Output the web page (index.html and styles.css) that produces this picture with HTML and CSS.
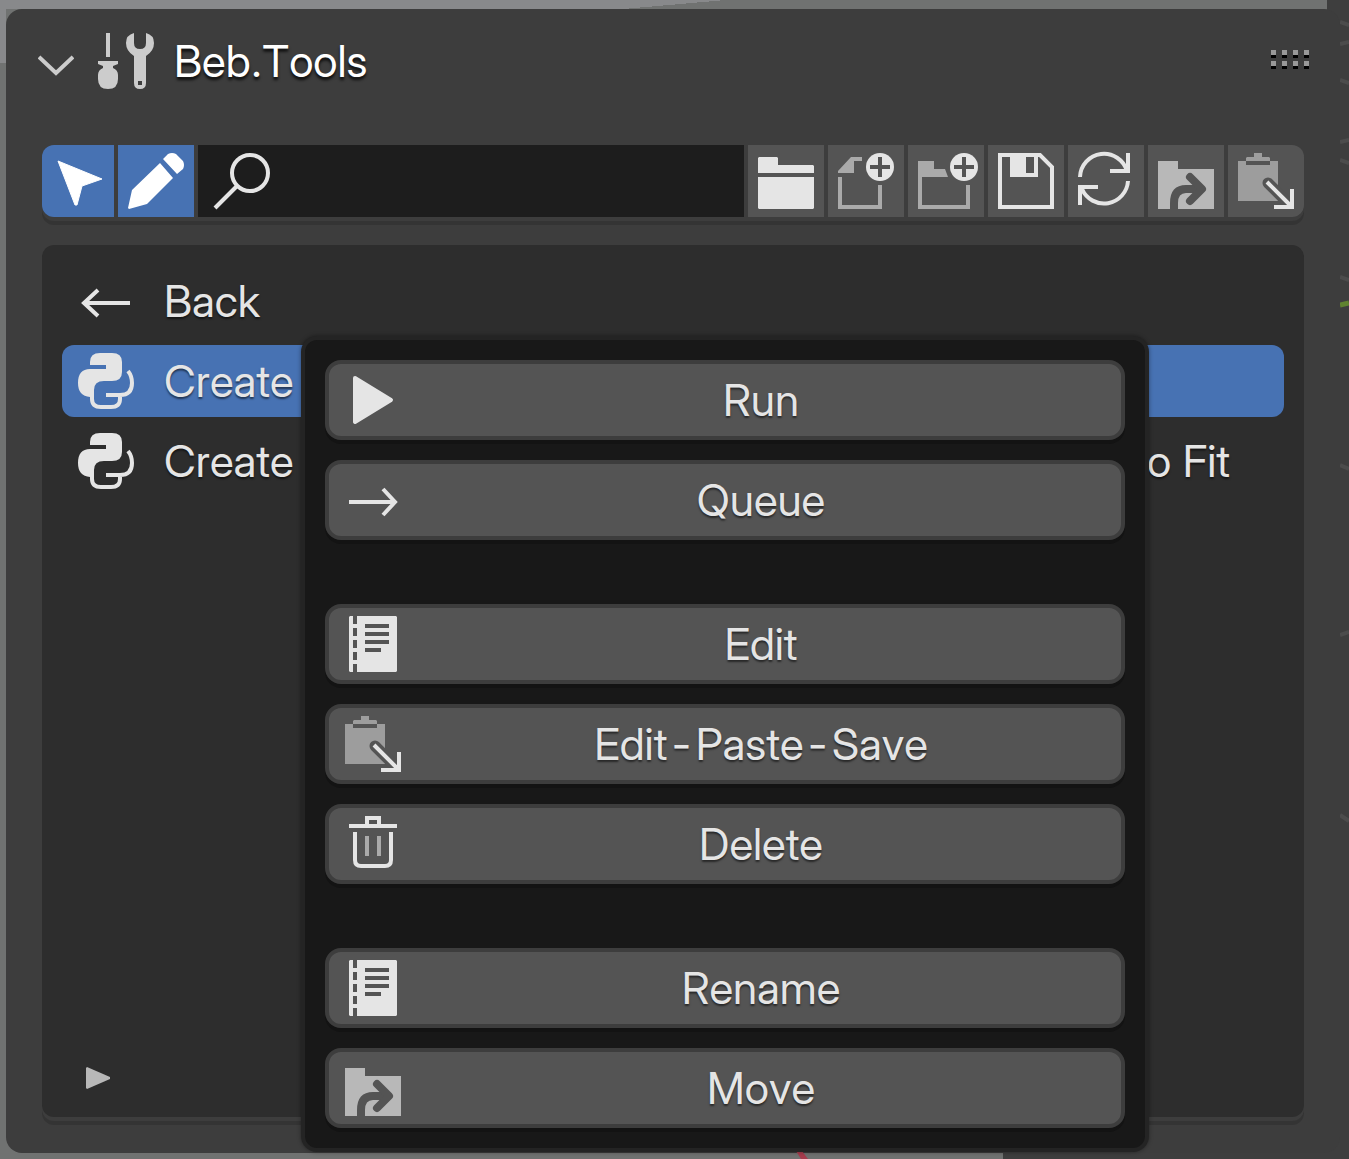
FILE: index.html
```html
<!DOCTYPE html>
<html lang="en">
<head>
<meta charset="utf-8">
<title>Beb.Tools</title>
<link rel="stylesheet" href="styles.css">
</head>
<body>
<svg class="sprite" aria-hidden="true">
  <symbol id="python" viewBox="0 0 56 56">
    <path fill="currentColor" d="M12 12V9Q12 0 22 0H34Q44 0 44 9V19Q44 28 34 28H26Q16 28 16 37V44H12Q0 43 0 30Q0 16 12 16H28V12Z"/>
    <path class="line" d="M14 42V46Q14 54 23 54H33Q42 54 42 46V42M28 42H42Q54 42 54 30Q54 23 50 18"/>
  </symbol>
  <symbol id="notebook" viewBox="0 0 56 56">
    <path fill="currentColor" fill-rule="evenodd" d="M5 0H8V8H12V0H51L52 1V55L51 56H12V48H8V56H5L4 55V1ZM8 12V20H12V12ZM8 24V32H12V24ZM8 36V44H12V36ZM20 8V12H44V8ZM20 16V20H44V16ZM20 24V28H44V24ZM20 32V36H36V32Z"/>
  </symbol>
  <symbol id="paste" viewBox="0 0 56 56">
    <path fill="#9d9d9d" d="M0 8H8V12H32V8H40V48H0ZM8 8V5L9 4H16V0H24V4H31L32 5V8Z"/>
    <path stroke="#545454" stroke-width="11" stroke-linecap="round" d="M30 30L52 52"/>
    <path class="line" d="M29 29L53 53M54 36V54H36"/>
  </symbol>
  <symbol id="move" viewBox="0 0 56 56">
    <path fill="#b8b8b8" d="M0 8H20V16H56V56H0Z"/>
    <path fill="none" stroke="#545454" stroke-width="8" d="M16 56V50Q16 36 28 36H42"/>
    <path fill="none" stroke="#545454" stroke-width="8" stroke-linecap="round" stroke-linejoin="round" d="M32 24L44 36L32 48"/>
  </symbol>
</svg>

<svg class="grid-lines" viewBox="0 0 9 840" aria-hidden="true">
  <path fill="none" stroke="#4c4c4c" stroke-width="4" d="M0 22L9 25M0 44L9 42M0 80L9 83M0 142L9 140M0 160L9 163M0 277L9 280M0 465L9 469M0 635L9 632M0 815L9 821"/>
  <path fill="none" stroke="#608330" stroke-width="5" d="M0 305L9 303"/>
</svg>
<svg class="axis-line" viewBox="0 0 12 8" aria-hidden="true"><path fill="#a63c4d" d="M0 0H6L12 8H5Z"/></svg>

<main class="panel">
  <header class="panel-header">
    <svg class="chevron" viewBox="0 0 36 56"><path class="line" d="M1 24L18 40L35 24"/></svg>
    <svg class="icon tools" viewBox="0 0 56 56">
      <path fill="currentColor" d="M8 0H12V24H8ZM0 28H20V31L15 33V35Q20 37 20 42V46Q20 56 10 56Q0 56 0 46V42Q0 37 5 35V33L0 31Z"/>
      <path fill="currentColor" fill-rule="evenodd" d="M36 0V10Q36 16 42 16Q48 16 48 10V0Q56 2 56 10Q56 18 48 23V50Q48 56 42 56Q36 56 36 50V23Q28 18 28 10Q28 2 36 0ZM40 48V52H44V48Z"/>
    </svg>
    <h1 class="title">Beb.Tools</h1>
    <svg class="grip" viewBox="0 0 38 22">
      <path fill="#999" d="M0 0h5v5h-5zM11 0h5v5h-5zM22 0h5v5h-5zM33 0h5v5h-5zM0 11h5v5h-5zM11 11h5v5h-5zM22 11h5v5h-5zM33 11h5v5h-5z"/>
      <path fill="#000" d="M0 5h5v3h-5zM11 5h5v3h-5zM22 5h5v3h-5zM33 5h5v3h-5zM0 16h5v3h-5zM11 16h5v3h-5zM22 16h5v3h-5zM33 16h5v3h-5z"/>
    </svg>
  </header>

  <div class="toolbar">
    <button class="tool tool-first tool-on" aria-label="Select"><svg class="icon" viewBox="0 0 56 56"><path fill="currentColor" stroke="currentColor" stroke-linejoin="round" d="M8 8L52 26L32 33L27 52H25Z"/></svg></button>
    <button class="tool tool-on" aria-label="Edit mode"><svg class="icon" viewBox="0 0 56 56"><path fill="currentColor" d="M32 10L45 25L19 51L1 56L0 55L4 37ZM35 6L40 1Q44 -1 48 1L55 8Q57 12 55 16L49 21Z"/></svg></button>
    <label class="search">
      <svg class="icon" viewBox="0 0 56 56"><circle class="line" cx="36" cy="20" r="18"/><path class="line" d="M23 33L1 55"/></svg>
      <input class="search-input" type="text" aria-label="Search">
    </label>
    <button class="tool" aria-label="Open folder"><svg class="icon" viewBox="0 0 56 56"><path fill="currentColor" d="M1 4H19L20 5V12H55L56 13V20H0V5ZM0 24H56V55L55 56H1L0 55Z"/></svg></button>
    <button class="tool" aria-label="New file"><svg class="icon" viewBox="0 0 56 56"><path fill="#aaa" d="M0 20V18L13 4H24V8H16V20Z"/><path class="line dim" d="M2 24V54H42V32"/><circle cx="42" cy="14" r="14" fill="currentColor"/><path stroke="#545454" stroke-width="4" d="M32 14H52M42 4V24"/></svg></button>
    <button class="tool" aria-label="New folder"><svg class="icon" viewBox="0 0 56 56"><path fill="#aaa" d="M0 8H16V16H27L30 24H0Z"/><path class="line dim" d="M2 23V54H50V32"/><circle cx="46" cy="14" r="14" fill="currentColor"/><path stroke="#545454" stroke-width="4" d="M36 14H56M46 4V24"/></svg></button>
    <button class="tool" aria-label="Save"><svg class="icon" viewBox="0 0 56 56"><path class="line" d="M2 2H42L54 14V54H2Z"/><path fill="currentColor" fill-rule="evenodd" d="M12 0H40V24H12ZM28 4V20H36V4Z"/></svg></button>
    <button class="tool" aria-label="Reload"><svg class="icon" viewBox="0 0 56 56"><path class="line" d="M2 24A24 24 0 0 1 49 18M50 0V18H32M50 28A24 24 0 0 1 4 36M2 52V34H20"/></svg></button>
    <button class="tool" aria-label="Move to folder"><svg class="icon"><use href="#move"/></svg></button>
    <button class="tool tool-last" aria-label="Paste"><svg class="icon"><use href="#paste"/></svg></button>
  </div>

  <section class="list">
    <button class="row"><svg class="icon" viewBox="0 0 56 56"><path class="line" d="M5 30H52M20 17L6 30L20 43"/></svg><span>Back</span></button>
    <button class="row row-selected"><svg class="icon"><use href="#python"/></svg><span>Create</span></button>
    <button class="row"><svg class="icon"><use href="#python"/></svg><span>Create</span><span class="row-end">o Fit</span></button>
    <button class="expand" aria-label="Expand"><svg class="expand-icon" viewBox="0 0 24 22"><path fill="currentColor" d="M0 1L1 0L24 10V12L1 22L0 21Z"/></svg></button>
  </section>
</main>

<nav class="menu">
  <div class="menu-group">
    <button class="item"><svg class="icon" viewBox="0 0 56 56"><path fill="currentColor" stroke="currentColor" stroke-width="4" stroke-linejoin="round" d="M10 6L46 28L10 50Z"/></svg><span class="item-label">Run</span></button>
    <button class="item"><svg class="icon" viewBox="0 0 56 56"><path class="line" d="M4 30H51M38 17L50 30L38 43"/></svg><span class="item-label">Queue</span></button>
  </div>
  <div class="menu-group">
    <button class="item"><svg class="icon"><use href="#notebook"/></svg><span class="item-label">Edit</span></button>
    <button class="item"><svg class="icon"><use href="#paste"/></svg><span class="item-label">Edit-Paste-Save</span></button>
    <button class="item"><svg class="icon" viewBox="0 0 56 56"><path class="line" d="M4 10H52M22 9V2H34V9M10 16V44Q10 50 16 50H40Q46 50 46 44V16"/><path class="line dim" d="M22 20V40M34 20V40"/></svg><span class="item-label">Delete</span></button>
  </div>
  <div class="menu-group">
    <button class="item"><svg class="icon"><use href="#notebook"/></svg><span class="item-label">Rename</span></button>
    <button class="item"><svg class="icon"><use href="#move"/></svg><span class="item-label">Move</span></button>
  </div>
</nav>
</body>
</html>
```
FILE: styles.css
```css
* {
  box-sizing: border-box;
}

body {
  position: relative;
  display: flex;
  min-height: 100vh;
  margin: 0;
  padding: 9px 9px 6px 6px;
  background:
    linear-gradient(#3e3e3e, #3e3e3e) right / 22px 100% no-repeat,
    linear-gradient(#3e3e3e, #3e3e3e) right bottom / 346px 8px no-repeat,
    linear-gradient(175deg, #88898b 50%, #707271 50%) left top / 100% 9px no-repeat,
    linear-gradient(#88898b, #88898b) left top / 6px 63px no-repeat,
    #707271;
  color: #e5e5e5;
  font: 44px/56px "Inter Display", Inter, "Liberation Sans", sans-serif;
  font-kerning: none;
  font-variant-numeric: tabular-nums;
  font-variation-settings: "opsz" 32;
}

button,
input {
  margin: 0;
  padding: 0;
  border: 0;
  background: none;
  color: inherit;
  font: inherit;
  font-kerning: inherit;
  font-variant-numeric: inherit;
  font-variation-settings: inherit;
}

.sprite {
  position: absolute;
  width: 0;
  height: 0;
}

.grid-lines {
  position: absolute;
  top: 0;
  right: 0;
  width: 9px;
  height: 840px;
}

.axis-line {
  position: absolute;
  bottom: 0;
  left: 796px;
  width: 12px;
  height: 8px;
}

.icon {
  display: block;
  flex: none;
  width: 56px;
  height: 56px;
  overflow: visible;
}

.line {
  fill: none;
  stroke: currentColor;
  stroke-width: 4px;
}

.dim {
  stroke: #aaa;
}

.panel {
  display: flex;
  flex: 1;
  flex-direction: column;
  min-width: 0;
  padding: 0 36px 36px;
  border-radius: 16px;
  background: #3d3d3d;
}

.panel-header {
  display: flex;
  align-items: center;
  height: 104px;
  margin: 0 -5px 32px -4px;
  color: #ccc;
}

.chevron {
  width: 36px;
  height: 56px;
  margin-right: 24px;
}

.title {
  flex: 1;
  margin: 0 0 0 20px;
  color: #fff;
  font-size: 44px;
  font-weight: 400;
  text-shadow: 0 3px 3px #000c;
}

.grip {
  width: 38px;
  height: 22px;
}

.toolbar {
  display: flex;
  gap: 4px;
  height: 72px;
  margin-bottom: 28px;
  border-radius: 12px;
  box-shadow: 0 4px #3d3d3d, 0 8px #343434;
}

.tool {
  display: flex;
  flex: none;
  align-items: center;
  justify-content: center;
  width: 76px;
  background: #545454;
}

.tool-on {
  background: #4772b3;
  color: #fff;
}

.tool-first {
  width: 72px;
  border-radius: 12px 0 0 12px;
}

.tool-last {
  border-radius: 0 12px 12px 0;
}

.search {
  display: flex;
  flex: 1;
  align-items: center;
  min-width: 0;
  padding: 0 16px;
  background: #1d1d1d;
}

.search-input {
  flex: 1;
  min-width: 0;
  outline: 0;
}

.list {
  display: flex;
  flex: 1;
  flex-direction: column;
  gap: 8px;
  padding: 20px;
  border-radius: 12px;
  background: #2d2d2d;
  box-shadow: 0 4px #3d3d3d, 0 8px #343434;
}

.row {
  display: flex;
  align-items: center;
  gap: 30px;
  height: 72px;
  padding: 0 54px 0 16px;
  border-radius: 12px;
  text-align: left;
  text-shadow: 0 2px 2px #0008;
}

.row-selected {
  background: #4772b3;
}

.row-end {
  margin-left: auto;
}

.expand {
  align-self: flex-start;
  margin: auto 0 8px 24px;
  color: #b8b8b8;
}

.expand-icon {
  display: block;
  width: 24px;
  height: 22px;
}

.menu {
  position: absolute;
  top: 336px;
  right: 200px;
  left: 301px;
  display: flex;
  flex-direction: column;
  gap: 64px;
  padding: 20px;
  border: 4px solid #242424;
  border-radius: 16px;
  background: #181818;
  box-shadow: 0 0 4px #0006;
}

.menu-group {
  display: flex;
  flex-direction: column;
  gap: 20px;
}

.item {
  display: flex;
  align-items: center;
  height: 80px;
  padding-left: 16px;
  border: 4px solid #3d3d3d;
  border-radius: 16px;
  background: #545454;
  box-shadow: 0 4px #131313;
  text-shadow: 0 2px 2px #0008;
}

.item-label {
  flex: 1;
  text-align: center;
}
```
